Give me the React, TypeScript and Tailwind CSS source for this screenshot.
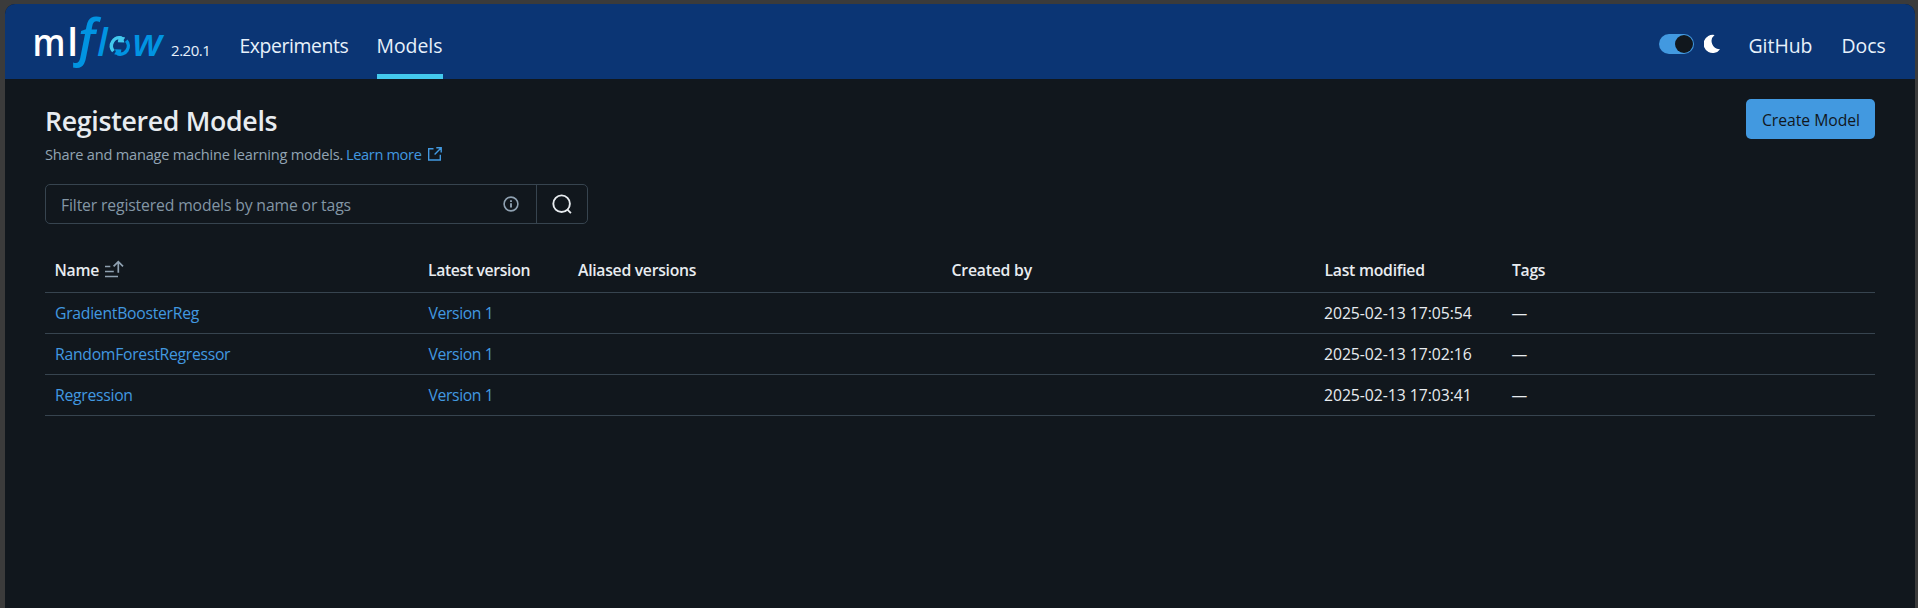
import React from "react";

const columns = [
  { label: "Name", width: "w-[373.5px]", tracking: "tracking-[-0.25px]" },
  { label: "Latest version", width: "w-[150px]", tracking: "tracking-[-0.35px]" },
  { label: "Aliased versions", width: "w-[373.5px]", tracking: "tracking-[-0.28px]" },
  { label: "Created by", width: "w-[373px]", tracking: "tracking-[-0.2px]" },
  { label: "Last modified", width: "w-[187.5px]", tracking: "tracking-[-0.25px]" },
  { label: "Tags", width: "flex-1", tracking: "tracking-[-0.3px]" },
];

const models = [
  { name: "GradientBoosterReg", version: "Version 1", modified: "2025-02-13 17:05:54" },
  { name: "RandomForestRegressor", version: "Version 1", modified: "2025-02-13 17:02:16" },
  { name: "Regression", version: "Version 1", modified: "2025-02-13 17:03:41" },
];

function Logo() {
  return (
    <svg
      viewBox="28 12 144 60"
      className="h-[60px] w-[144px] shrink-0 overflow-visible"
      fontFamily="'Open Sans', sans-serif"
      fontWeight="600"
    >
      <g fill="#ffffff">
        <text transform="translate(32.4 56) scale(0.91 1)" fontSize="38">m</text>
        <text x="67.2" y="56" fontSize="38.6">l</text>
      </g>
      <g fill="#0194e2" fontStyle="italic">
        <text transform="translate(73.6 54.6) scale(1 1.037)" fontSize="50">ƒ</text>
        <text x="97" y="56" fontSize="38.6">l</text>
        <text transform="translate(132.6 56) scale(1.05 1)" fontSize="38">w</text>
      </g>
      <g fill="none" strokeWidth="3.4">
        <path d="M113.4 51.2 A8.2 8.2 0 0 1 121.5 37.9" stroke="#43c9ed" />
        <path d="M126.3 40.6 A8.2 8.2 0 0 1 117.6 53.8" stroke="#0194e2" />
      </g>
      <path d="M118.8 36 L125.2 37.6 L123.6 40 L124.4 42.6 L117.8 42.2 Z" fill="#43c9ed" />
      <path d="M120.4 55.8 L114.2 54.2 L115.8 51.8 L115 49.2 L121.4 49.6 Z" fill="#0194e2" />
    </svg>
  );
}

function MoonIcon() {
  return (
    <svg viewBox="0 0 18 20" className="h-5 w-[18px]">
      <path d="M10.6 1 A9.1 9.1 0 1 0 16.1 15.2 A8 8 0 0 1 10.6 1 Z" fill="#fff" />
    </svg>
  );
}

function NewWindowIcon() {
  return (
    <svg viewBox="0 0 16 16" className="h-4 w-4" fill="none" stroke="#4299e0" strokeWidth="1.4">
      <path d="M6.5 2.7 H1.7 V14 H13.3 V8.8 M9.3 1.7 H14.2 V6.6 M14 1.9 L7.6 8.4" />
    </svg>
  );
}

function InfoIcon() {
  return (
    <svg viewBox="0 0 16 16" className="h-4 w-4" fill="none" stroke="#8fa1b1" strokeWidth="1.6">
      <circle cx="8" cy="8" r="6.9" />
      <path d="M8 7.3 V11.4 M8 4.3 V6.1" strokeWidth="1.9" />
    </svg>
  );
}

function SearchIcon() {
  return (
    <svg viewBox="0 0 20 20" className="h-5 w-5" fill="none" stroke="#e8ecf0" strokeWidth="1.9">
      <circle cx="9.6" cy="9.7" r="8.3" />
      <path d="M15.4 15.6 L18.9 19.1" />
    </svg>
  );
}

function SortAscendingIcon() {
  return (
    <svg viewBox="0 0 20 20" className="h-5 w-5" fill="none" stroke="#8fa1b1" strokeWidth="1.7">
      <path d="M1 7.5 H6.3 M1 12.5 H9.8 M1 17.5 H14 M14.3 13.7 V3 M9.6 7.4 L14.3 2.6 L19 7.4" />
    </svg>
  );
}

export default function App() {
  return (
    <div className="h-[608px] overflow-hidden bg-[#3b3b3b] pt-1 pr-[3px] pl-[5px] font-['Open_Sans',sans-serif]">
      <div className="flex h-full flex-col overflow-hidden rounded-t-[10px] bg-[#11171d]">
        <header className="flex h-[75px] shrink-0 bg-[#0b3574] pr-[30px] pl-[23px] text-[19.4px] leading-[84px] text-[#e7f1fb]">
          <div className="flex pt-2">
            <Logo />
            <span className="-ml-px text-[15px] leading-[76px] tracking-[-0.45px]">2.20.1</span>
          </div>
          <nav className="ml-[29px] flex gap-[29px]">
            <a className="w-[108px] tracking-[-0.42px] whitespace-nowrap">Experiments</a>
            <a className="h-[75px] w-[66px] border-b-[5px] border-[#43c9ed]">Models</a>
          </nav>
          <div className="ml-auto flex">
            <div className="flex items-center pt-[5px]">
              <div className="flex h-5 w-[35px] justify-end rounded-full bg-[#4299e0] p-px">
                <div className="h-[18px] w-[18px] rounded-full bg-[#11171d]" />
              </div>
              <div className="ml-[10px]">
                <MoonIcon />
              </div>
            </div>
            <a className="ml-[27px] w-[64px]">GitHub</a>
            <a className="ml-[29px] w-[43.5px] whitespace-nowrap">Docs</a>
          </div>
        </header>

        <main className="flex flex-col pt-5 pr-10 pl-10 text-[15.75px]">
          <div className="flex h-10 items-start justify-between">
            <h1 className="text-[26.7px] leading-[44px] font-semibold tracking-[-0.3px] text-[#e8ecf0]">
              Registered Models
            </h1>
            <button className="h-10 w-[129px] rounded-[5px] bg-[#4299e0] pt-0.5 pl-px leading-[38px] tracking-[-0.05px] text-[#11171d]">
              Create Model
            </button>
          </div>

          <div className="mt-[5px] flex h-5 items-center text-[14.6px] leading-5 text-[#92a4b3]">
            <span className="w-[301px] tracking-[-0.21px] whitespace-nowrap">
              Share and manage machine learning models.
            </span>
            <a className="w-[81px] tracking-[-0.36px] whitespace-nowrap text-[#4299e0]">Learn more</a>
            <NewWindowIcon />
          </div>

          <div className="mt-5 flex h-10 w-[543px] rounded-[5px] border border-[#37444f]">
            <div className="flex flex-1 items-center justify-between border-r border-[#37444f] pr-[17px] pl-[15px]">
              <span className="pt-[3px] tracking-[-0.15px] text-[#8396a5]">Filter registered models by name or tags</span>
              <InfoIcon />
            </div>
            <div className="flex w-[50px] items-center justify-center">
              <SearchIcon />
            </div>
          </div>

          <div className="mt-[24px] flex h-[45px] border-b border-[#37444f] leading-[44px] font-semibold text-[#e8ecf0]">
            {columns.map((c) => (
              <div key={c.label} className={`flex shrink-0 items-center pl-[9.5px] ${c.width}`}>
                <span className={c.tracking}>{c.label}</span>
                {c.label === "Name" && (
                  <span className="-mt-0.5 ml-[4.5px]">
                    <SortAscendingIcon />
                  </span>
                )}
              </div>
            ))}
          </div>

          {models.map((m) => (
            <div key={m.name} className="flex h-[41px] border-b border-[#37444f] leading-10 text-[#e8ecf0]">
              <a className="w-[373.5px] pl-[10px] tracking-[-0.28px] text-[#4299e0]">{m.name}</a>
              <a className="w-[150px] pl-[10px] tracking-[-0.38px] text-[#4299e0]">{m.version}</a>
              <span className="w-[373.5px]" />
              <span className="w-[373px]" />
              <span className="w-[187.5px] pl-[9px] tracking-[-0.05px]">{m.modified}</span>
              <span className="flex-1 pl-[9px]">—</span>
            </div>
          ))}
        </main>
      </div>
    </div>
  );
}
